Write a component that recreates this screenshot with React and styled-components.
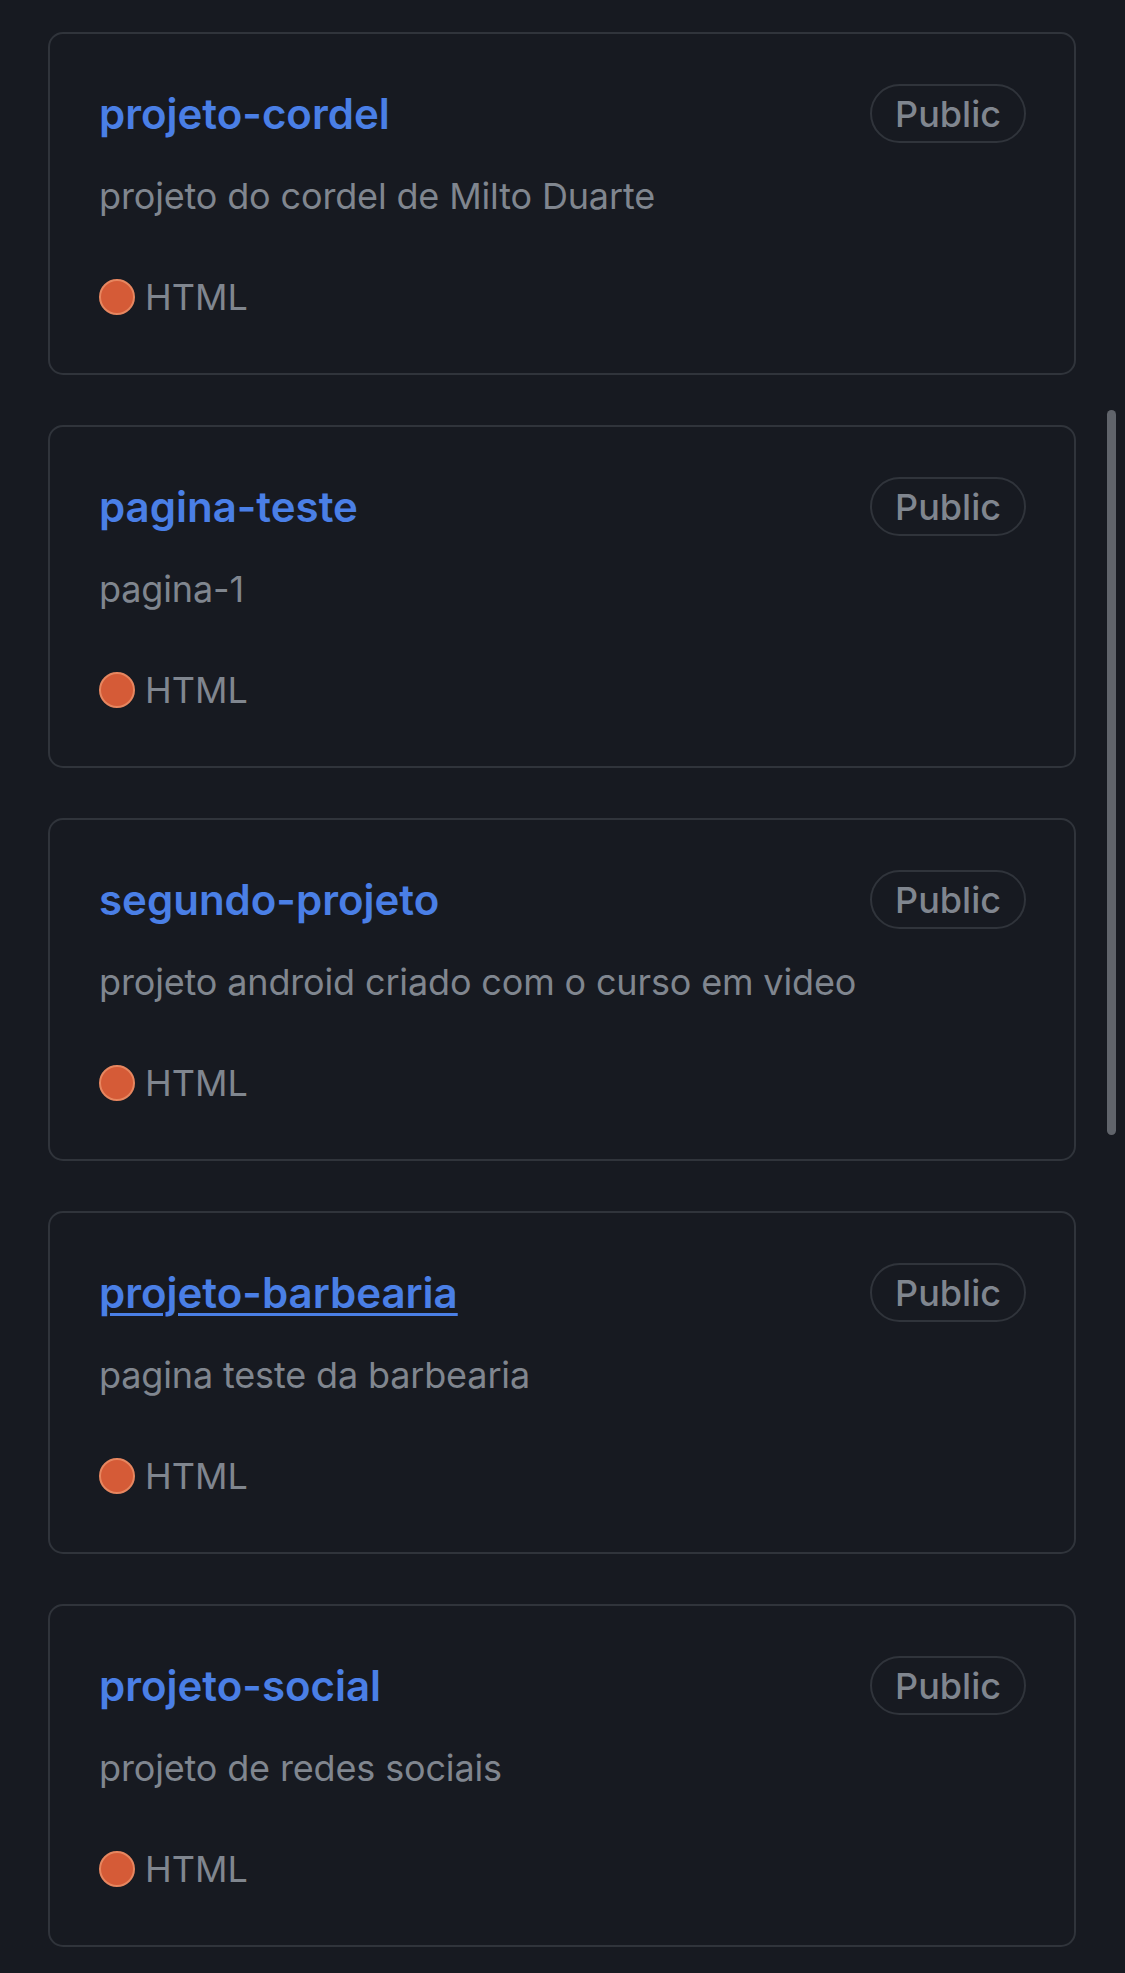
import React from "react";
import styled, { createGlobalStyle } from "styled-components";

const repos = [
    { name: "projeto-cordel", desc: "projeto do cordel de Milto Duarte", lang: "HTML" },
    { name: "pagina-teste", desc: "pagina-1", lang: "HTML" },
    { name: "segundo-projeto", desc: "projeto android criado com o curso em video", lang: "HTML" },
    { name: "projeto-barbearia", desc: "pagina teste da barbearia", lang: "HTML", hovered: true },
    { name: "projeto-social", desc: "projeto de redes sociais", lang: "HTML" },
];

function App() {
    return (
        <>
            <GlobalStyle />
            <Page>
                <List>
                    {repos.map((repo) => (
                        <Card key={repo.name}>
                            <Header>
                                <Title href="#" $hovered={repo.hovered}>
                                    {repo.name}
                                </Title>
                                <Badge>Public</Badge>
                            </Header>
                            <Description>{repo.desc}</Description>
                            <Footer>
                                <LangDot />
                                <LangName>{repo.lang}</LangName>
                            </Footer>
                        </Card>
                    ))}
                </List>
                <ScrollThumb />
            </Page>
        </>
    );
}

const GlobalStyle = createGlobalStyle`
    html, body {
        margin: 0;
        padding: 0;
        background-color: #171a21;
    }
    body {
        font-family: Inter, "Noto Sans", "Liberation Sans", sans-serif;
        -webkit-font-smoothing: antialiased;
    }
`;

const Page = styled.main`
    position: relative;
    min-height: 1973px;
    background-color: #171a21;
    padding: 32px 49px 26px 48px;
    box-sizing: border-box;
`;

const List = styled.div`
    display: flex;
    flex-direction: column;
    gap: 50px;
`;

const Card = styled.article`
    height: 343px;
    box-sizing: border-box;
    border: 2px solid #30343b;
    border-radius: 15px;
    padding: 50px 48px 0 49px;
    display: flex;
    flex-direction: column;
`;

const Header = styled.div`
    display: flex;
    align-items: center;
    justify-content: space-between;
    height: 59px;
`;

const Title = styled.a`
    font-size: 42px;
    font-weight: 600;
    line-height: 59px;
    color: #4a7fe6;
    text-decoration: ${(p) => (p.$hovered ? "underline" : "none")};
    text-decoration-thickness: 3px;
    text-underline-offset: 5px;
`;

const Badge = styled.span`
    display: inline-flex;
    align-items: center;
    justify-content: center;
    box-sizing: border-box;
    height: 59px;
    padding: 0 23px;
    border: 2px solid #30343b;
    border-radius: 30px;
    font-size: 36px;
    font-weight: 500;
    color: #80868f;
`;

const Description = styled.p`
    margin: 29px 0 0;
    font-size: 36px;
    line-height: 48px;
    letter-spacing: -0.15px;
    color: #80868f;
`;

const Footer = styled.div`
    display: flex;
    align-items: center;
    gap: 10px;
    margin-top: 53px;
    height: 48px;
`;

const LangDot = styled.span`
    width: 36px;
    height: 36px;
    box-sizing: border-box;
    border-radius: 50%;
    background-color: #d55b37;
    border: 2px solid #e7865f;
`;

const LangName = styled.span`
    font-size: 36px;
    line-height: 48px;
    color: #80868f;
`;

const ScrollThumb = styled.div`
    position: absolute;
    top: 410px;
    left: 1107px;
    width: 9px;
    height: 725px;
    border-radius: 5px;
    background-color: #60646b;
`;

export default App;
